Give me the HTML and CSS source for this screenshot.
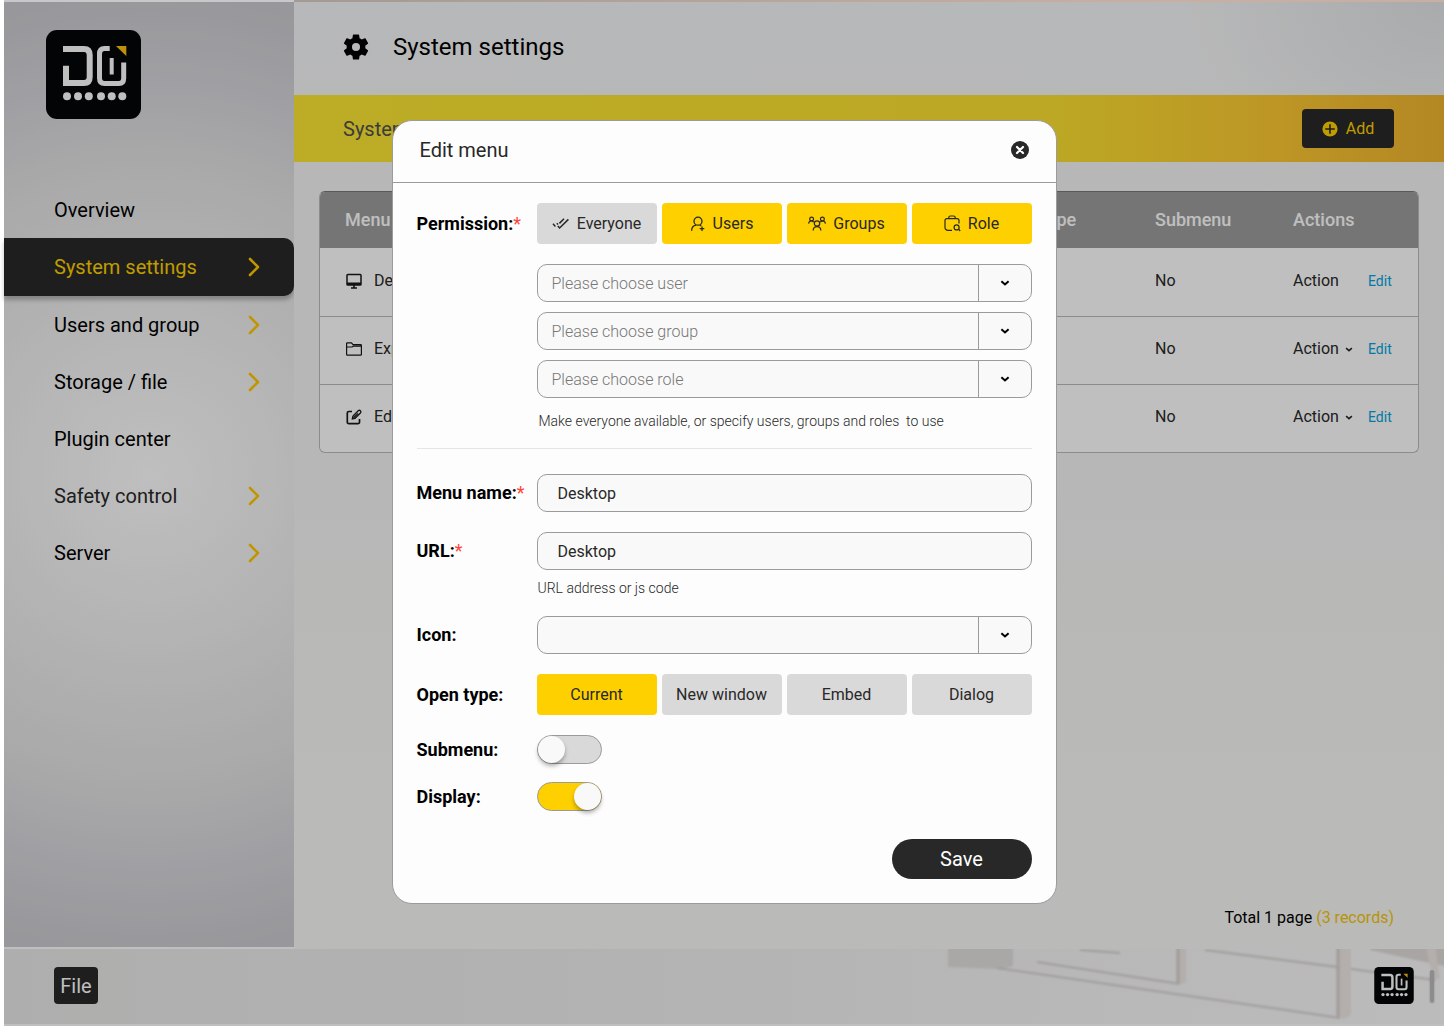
FILE: index.html
```html
<!DOCTYPE html>
<html lang="en">
<head>
<meta charset="utf-8">
<meta name="viewport" content="width=device-width, initial-scale=1">
<title>System settings</title>
<link rel="stylesheet" href="styles.css">
</head>
<body>
<svg class="sprite" aria-hidden="true">
  <symbol id="logo" viewBox="0 0 95 89">
    <rect width="95" height="89" rx="11" fill="#050608"/>
    <path d="M17 19H38Q43.7 19 43.7 25V47Q43.7 53 38 53H20V35.7" fill="none" stroke="#fff" stroke-width="6"/>
    <path d="M63.7 18.5H58.5Q53.5 18.5 53.5 24V48Q53.5 53.5 58.5 53.5H73Q77.7 53.5 77.7 48V32.5" fill="none" stroke="#fff" stroke-width="5"/>
    <path d="M65.7 28V44.5" stroke="#fff" stroke-width="4"/>
    <path d="M70 16H80.3V26Z" fill="#ffc20e"/>
    <g fill="#fff"><circle cx="21" cy="66.3" r="4"/><circle cx="32" cy="66.3" r="4"/><circle cx="42.8" cy="66.3" r="4"/><circle cx="55" cy="66.3" r="4"/><circle cx="65.7" cy="66.3" r="4"/><circle cx="76.3" cy="66.3" r="4"/></g>
  </symbol>
  <symbol id="next" viewBox="0 0 12 20"><path d="M2 2L10 10L2 18" fill="none" stroke="currentColor" stroke-width="2.6" stroke-linecap="round" stroke-linejoin="round"/></symbol>
  <symbol id="down" viewBox="0 0 10 6"><path d="M1.4 1.2L5 4.4L8.6 1.2" fill="none" stroke="currentColor" stroke-width="2"/></symbol>
</svg>

<div class="app">
  <aside class="sidebar">
    <a class="brand" href="#" aria-label="Home"><svg width="95" height="89"><use href="#logo"/></svg></a>
    <nav class="nav">
      <a class="nav-item" href="#">Overview</a>
      <a class="nav-item active" href="#" aria-current="page">System settings<svg class="next"><use href="#next"/></svg></a>
      <a class="nav-item" href="#">Users and group<svg class="next"><use href="#next"/></svg></a>
      <a class="nav-item" href="#">Storage / file<svg class="next"><use href="#next"/></svg></a>
      <a class="nav-item" href="#">Plugin center</a>
      <a class="nav-item soft" href="#">Safety control<svg class="next"><use href="#next"/></svg></a>
      <a class="nav-item" href="#">Server<svg class="next"><use href="#next"/></svg></a>
    </nav>
  </aside>

  <main class="main">
    <header class="title-bar">
      <svg class="gear" viewBox="2 2 20 20" aria-hidden="true"><path d="M19.14 12.94c.04-.3.06-.61.06-.94 0-.32-.02-.64-.07-.94l2.03-1.58c.18-.14.23-.41.12-.61l-1.92-3.32c-.12-.22-.37-.29-.59-.22l-2.39.96c-.5-.38-1.03-.7-1.62-.94l-.36-2.54c-.04-.24-.24-.41-.48-.41h-3.84c-.24 0-.43.17-.47.41l-.36 2.54c-.59.24-1.13.57-1.62.94l-2.39-.96c-.22-.08-.47 0-.59.22L2.74 8.87c-.12.21-.08.47.12.61l2.03 1.58c-.05.3-.09.63-.09.94s.02.64.07.94l-2.03 1.58c-.18.14-.23.41-.12.61l1.92 3.32c.12.22.37.29.59.22l2.39-.96c.5.38 1.03.7 1.62.94l.36 2.54c.05.24.24.41.48.41h3.84c.24 0 .44-.17.47-.41l.36-2.54c.59-.24 1.13-.56 1.62-.94l2.39.96c.22.08.47 0 .59-.22l1.92-3.32c.12-.22.07-.47-.12-.61l-2.01-1.58zM12 15.1a3.1 3.1 0 1 1 0-6.2 3.1 3.1 0 0 1 0 6.2z"/></svg>
      <h1>System settings</h1>
    </header>
    <div class="band">
      <span>System menu</span>
      <button class="add" type="button">
        <svg width="16" height="16" viewBox="0 0 16 16" aria-hidden="true"><circle cx="8" cy="8" r="7.6" fill="#ffd000"/><path d="M8 3.2V12.8M3.2 8H12.8" stroke="#282828" stroke-width="1.6"/></svg>
        Add
      </button>
    </div>
    <section class="content">
      <div class="table-card">
        <table>
          <colgroup><col><col class="col-type"><col class="col-sub"><col class="col-act"></colgroup>
          <thead>
            <tr><th>Menu name</th><th>Open type</th><th>Submenu</th><th>Actions</th></tr>
          </thead>
          <tbody>
            <tr>
              <td><span class="cell"><svg class="row-icon" viewBox="0 0 18 18"><path d="M2.8 2.5H15.2A.8.8 0 0 1 16 3.3V12.2A.8.8 0 0 1 15.2 13H2.8A.8.8 0 0 1 2 12.2V3.3A.8.8 0 0 1 2.8 2.5Z" fill="none" stroke="#191919" stroke-width="1.5"/><path d="M2 10.500H16V13H2Z" fill="#191919"/><path d="M9 13V16M6 16H12" stroke="#191919" stroke-width="1.6"/></svg>Desktop</span></td>
              <td></td><td>No</td>
              <td><span class="acts"><span class="act">Action</span><a href="#">Edit</a></span></td>
            </tr>
            <tr>
              <td><span class="cell"><svg class="row-icon" viewBox="0 0 18 18"><path d="M1.6 14.4V3.6A.8.8 0 0 1 2.4 2.8H6.5L8 4.6H15.6A.8.8 0 0 1 16.4 5.4V14.4A.8.8 0 0 1 15.6 15.2H2.4A.8.8 0 0 1 1.6 14.4ZM1.6 7H7L8.4 6.2H16.4" fill="none" stroke="#191919" stroke-width="1.2"/></svg>Explorer</span></td>
              <td></td><td>No</td>
              <td><span class="acts"><button class="act" type="button">Action<svg class="caret"><use href="#down"/></svg></button><a href="#">Edit</a></span></td>
            </tr>
            <tr>
              <td><span class="cell"><svg class="row-icon" viewBox="0 0 18 18"><path d="M7 3.500H3.800A1.500 1.500 0 0 0 2.300 5V14.200A1.500 1.500 0 0 0 3.800 15.700H13A1.500 1.500 0 0 0 14.500 14.200V11" fill="none" stroke="#191919" stroke-width="1.700"/><path d="M7.300 11L7.800 8.200L13.200 2.800A1.500 1.500 0 0 1 15.400 5L10 10.400ZM8.600 9.800L13 5.400" fill="none" stroke="#191919" stroke-width="1.300"/></svg>Editor</span></td>
              <td></td><td>No</td>
              <td><span class="acts"><button class="act" type="button">Action<svg class="caret"><use href="#down"/></svg></button><a href="#">Edit</a></span></td>
            </tr>
          </tbody>
        </table>
      </div>
      <p class="total">Total 1 page <span>(3 records)</span></p>
    </section>
  </main>

  <footer class="dock">
    <button class="file" type="button">File</button>
    <a class="dock-logo" href="#" aria-label="Desktop"><svg width="40" height="37"><use href="#logo"/></svg></a>
    <span class="grip"></span>
  </footer>
</div>

<div class="backdrop">
  <dialog class="modal" open aria-labelledby="modal-title">
    <header class="modal-head">
      <h2 id="modal-title">Edit menu</h2>
      <button class="close" type="button" aria-label="Close"><svg width="18" height="18" viewBox="0 0 18 18"><circle cx="9" cy="9" r="9" fill="#282828"/><path d="M6 6L12 12M12 6L6 12" stroke="#fff" stroke-width="2.2" stroke-linecap="round"/></svg></button>
    </header>
    <form class="form">
      <div class="field">
        <span class="label">Permission:<i>*</i></span>
        <div class="stack">
          <div class="choices" role="group" aria-label="Permission">
            <button class="choice" type="button" aria-pressed="false"><svg width="18" height="14" viewBox="0 0 18 14"><path d="M1 6.800L3.400 9.400M5.800 9L7.600 11L16.400 2.400M4.800 6.200L6 7.600M7.400 6.400L12 1.800" fill="none" stroke="#282828" stroke-width="1.500"/></svg>Everyone</button>
            <button class="choice on" type="button" aria-pressed="true"><svg width="16" height="16" viewBox="0 0 16 16"><path d="M1.600 14.800C1.600 11.500 3.600 9.700 6 9.200M10 9.200L11.400 10M8 1.200A4 4 0 0 1 8 9.200A4 4 0 0 1 8 1.200ZM12 10.400V15M9.700 12.700H14.300" fill="none" stroke="#282828" stroke-width="1.300"/></svg>Users</button>
            <button class="choice on" type="button" aria-pressed="true"><svg width="18" height="16" viewBox="0 0 18 16"><g fill="none" stroke="#282828" stroke-width="1.200"><circle cx="9" cy="7.500" r="2.700"/><path d="M5.200 14.500C5.200 12 6.800 10.600 9 10.600S12.800 12 12.800 14.500M.6 7.600C.8 5.800 1.600 5 3.200 5S5 5.400 5.800 6.200M17.400 7.600C17.200 5.800 16.400 5 14.800 5S13 5.400 12.200 6.200"/><circle cx="3.600" cy="3" r="1.900"/><circle cx="14.400" cy="3" r="1.900"/></g></svg>Groups</button>
            <button class="choice on" type="button" aria-pressed="true"><svg width="17" height="17" viewBox="0 0 17 17"><path d="M8 15.400H4A3 3 0 0 1 1 12.400V5.600Q1 3.600 3 3.600H13Q15 3.600 15 5.600V8.500M4.800 3.600V2.600Q4.800 1 6.400 1H9.600Q11.200 1 11.200 2.600V3.600M14.600 14.200L16.200 16" fill="none" stroke="#282828" stroke-width="1.200"/><circle cx="12.600" cy="12.400" r="2.500" fill="none" stroke="#282828" stroke-width="1.200"/></svg>Role</button>
          </div>
          <div class="selects">
            <div class="select"><select aria-label="User"><option>Please choose user</option></select><svg class="arrow"><use href="#down"/></svg></div>
            <div class="select"><select aria-label="Group"><option>Please choose group</option></select><svg class="arrow"><use href="#down"/></svg></div>
            <div class="select"><select aria-label="Role"><option>Please choose role</option></select><svg class="arrow"><use href="#down"/></svg></div>
          </div>
          <p class="hint">Make everyone available, or specify users, groups and roles&nbsp; to use</p>
        </div>
      </div>
      <hr>
      <div class="field">
        <label class="label short" for="menu-name">Menu name:<i>*</i></label>
        <input class="text" id="menu-name" type="text" value="Desktop">
      </div>
      <div class="field">
        <label class="label short" for="url">URL:<i>*</i></label>
        <div>
          <input class="text" id="url" type="text" value="Desktop">
          <p class="hint url-hint">URL address or js code</p>
        </div>
      </div>
      <div class="field">
        <label class="label short" for="icon">Icon:</label>
        <div class="select"><select id="icon"><option></option></select><svg class="arrow"><use href="#down"/></svg></div>
      </div>
      <div class="field">
        <span class="label">Open type:</span>
        <div class="choices" role="group" aria-label="Open type">
          <button class="choice on" type="button" aria-pressed="true">Current</button>
          <button class="choice" type="button" aria-pressed="false">New window</button>
          <button class="choice" type="button" aria-pressed="false">Embed</button>
          <button class="choice" type="button" aria-pressed="false">Dialog</button>
        </div>
      </div>
      <div class="switches">
        <div class="field">
          <label class="label switch-label" for="submenu">Submenu:</label>
          <input class="switch" id="submenu" type="checkbox" role="switch">
        </div>
        <div class="field">
          <label class="label switch-label" for="display">Display:</label>
          <input class="switch" id="display" type="checkbox" role="switch" checked>
        </div>
      </div>
      <button class="save" type="submit">Save</button>
    </form>
  </dialog>
</div>
</body>
</html>
```
FILE: styles.css
```css
* { box-sizing: border-box; }
body {
  margin: 0;
  background: #fff;
  color: #000;
  font: 16px/20px Roboto, "Liberation Sans", sans-serif;
}
h1, h2, p { margin: 0; font-weight: 400; }
button, input, select { font: inherit; color: inherit; border: 0; padding: 0; margin: 0; }
button { cursor: pointer; background: none; }
a { color: inherit; text-decoration: none; }
svg { display: block; flex: none; }
.sprite { width: 0; height: 0; position: absolute; }

/* Application frame */
.app {
  min-height: 100vh;
  padding: 2px 0 2px 4px;
  display: grid;
  grid-template-columns: 290px 1fr;
  grid-template-rows: 1fr 75px;
  background: linear-gradient(to right, #c8c8cb 290px, #a39a93 290px, #c9afa2 80%) 4px 0 / 100% 2px no-repeat;
}
.sidebar {
  margin-bottom: 2px;
  background: radial-gradient(circle 480px at 50% 50%, #fff 0%, #f2f2f3 30%, #e2e2e2 65%, #d7d7dc 80%, #cbcbd0 100%);
}
.brand { display: block; width: 95px; margin: 28px 0 62px 42px; }
.nav { display: flex; flex-direction: column; }
.nav-item {
  height: 57px;
  padding: 0 34px 0 50px;
  display: flex;
  align-items: center;
  justify-content: space-between;
  font-size: 20px;
}
.nav-item.active {
  height: 58px;
  background: #282828;
  color: #ffd000;
  border-radius: 0 10px 10px 0;
  box-shadow: 0 4px 4px rgba(0, 0, 0, .25);
}
.nav-item.soft { color: #282828; }
.next { width: 12px; height: 20px; color: #ffc800; }

.main {
  display: flex;
  flex-direction: column;
  background:
    radial-gradient(ellipse 260px 180px at 100% 0, rgba(90, 100, 105, .12), transparent),
    linear-gradient(#f5f6f7, #f4f4f4 40%, #f9f9f7);
}
.title-bar { height: 93px; padding: 0 49px 4px; display: flex; align-items: center; gap: 24px; }
.gear { width: 26px; height: 26px; }
h1 { font-size: 24px; line-height: 28px; }
.band {
  height: 67px;
  padding: 0 50px 0 49px;
  display: flex;
  align-items: center;
  justify-content: space-between;
  background: linear-gradient(to right, #fbe633, #fbe030 66%, #fdc933 85%, #f0b52f);
  color: #505050;
  font-size: 20px;
}
.add {
  width: 92px;
  height: 39px;
  display: flex;
  align-items: center;
  justify-content: center;
  gap: 8px;
  border-radius: 4px;
  background: #282828;
  color: #ffd000;
  font-size: 16px;
}
.content { flex: 1; padding: 29px 25px 21px; display: flex; flex-direction: column; justify-content: space-between; }
.table-card { border: 1px solid #bbb; border-top-color: #777; border-radius: 6px; background: #fff; overflow: hidden; }
table { width: 100%; border-collapse: collapse; table-layout: fixed; }
.col-type { width: 160px; }
.col-sub { width: 138px; }
.col-act { width: 125px; }
th { height: 56px; padding: 0; background: #9d9d9d; color: #fff; font-size: 18px; font-weight: 500; text-align: left; }
td { height: 68px; padding: 0 0 2px; color: #282828; }
th:first-child, td:first-child { padding-left: 25px; }
tbody tr + tr td { border-top: 1px solid #bbb; }
.cell { display: flex; align-items: center; gap: 11px; }
.row-icon { width: 18px; height: 18px; }
.acts { display: flex; align-items: center; }
.act { width: 75px; display: flex; align-items: center; gap: 6px; }
.caret { width: 8px; height: 5px; }
.acts a { color: #00a3e0; font-size: 14px; }
.total { padding-right: 25px; text-align: right; }
.total span { color: #f5c60a; }

.dock {
  grid-column: 1 / -1;
  padding: 0 10px 2px 50px;
  display: flex;
  align-items: center;
  background:
    url("data:image/svg+xml,%3Csvg xmlns='http://www.w3.org/2000/svg' width='504' height='75'%3E%3Cdefs%3E%3Cfilter id='s' x='-10%25' y='-10%25' width='120%25' height='120%25'%3E%3CfeGaussianBlur stdDeviation='1'/%3E%3C/filter%3E%3C/defs%3E%3Cg filter='url(%23s)'%3E%3Cpath d='M8 -5H73V17L60 20L8 18Z' fill='%23e3e0de'/%3E%3Cpath d='M140 1L180 4M97 13L240 35M57 19L400 69M265 1L397 18M411 20L495 31' fill='none' stroke='%23d6d1ce' stroke-width='2'/%3E%3Cpath d='M430 -5H510V18L480 12L430 1Z' fill='%23e2dcda'/%3E%3Cpath d='M237 -5H246V34L241 35L237 34ZM397 -5H411V66L404 70L397 67ZM485 -5H495L500 30H493Z' fill='%23f0e9e6'/%3E%3Cpath d='M238 -5V34M398 -5V68' stroke='%23d6d0cd' stroke-width='3'/%3E%3C/g%3E%3C/svg%3E") right top no-repeat,
    linear-gradient(to right, #e9e9e8, #efeff0 45%, #f6f6f7 75%, #fafafa);
}
.file { width: 44px; height: 37px; border-radius: 4px; background: #282828; color: #fff; font-size: 20px; }
.dock-logo { margin: 0 16px 0 auto; }
.grip { width: 4px; height: 32px; border-radius: 2px; background: #bbb; box-shadow: 0 1px 2px rgba(0, 0, 0, .3); }

/* Edit dialog */
.backdrop {
  position: fixed;
  inset: 2px 0 0 4px;
  display: flex;
  align-items: center;
  justify-content: center;
  padding-bottom: 4px;
  background: rgba(0, 0, 0, .25);
}
.modal {
  position: static;
  width: 665px;
  margin: 0;
  padding: 0;
  border: 1px solid #9b9b9b;
  border-radius: 20px;
  background: #fdfdfd;
  color: #000;
}
.modal-head {
  height: 62px;
  padding: 0 27px 4px;
  display: flex;
  align-items: center;
  justify-content: space-between;
  border-bottom: 1px solid #9b9b9b;
  color: #282828;
}
h2 { font-size: 20px; line-height: 24px; }
.form { padding: 20px 24px 24px; display: flex; flex-direction: column; gap: 20px; }
.field { display: grid; grid-template-columns: 120px 1fr; align-items: start; }
.label { font-size: 18px; font-weight: 700; line-height: 41px; white-space: nowrap; }
.label.short { line-height: 38px; }
.label.switch-label { line-height: 29px; }
.label i { color: #ff4438; font-style: normal; font-weight: 400; }
.stack { display: grid; gap: 20px; }
.choices { display: grid; grid-template-columns: repeat(4, 1fr); gap: 5px; }
.choice {
  height: 41px;
  display: flex;
  align-items: center;
  justify-content: center;
  gap: 7px;
  border-radius: 4px;
  background: #d9d9d9;
  color: #282828;
}
.choice.on { background: #ffd000; }
.selects { display: grid; gap: 10px; }
.select { display: grid; align-items: center; }
.select select, .arrow { grid-area: 1 / 1; }
.select select, .text {
  width: 100%;
  height: 38px;
  border: 1px solid #9b9b9b;
  border-radius: 10px;
  background: #f9f9f9;
}
.select select {
  appearance: none;
  padding: 2px 68px 0 14px;
  background: linear-gradient(#9b9b9b, #9b9b9b) right 52px top / 1px 100% no-repeat #f9f9f9;
  color: #777;
  font-weight: 300;
}
.arrow { justify-self: end; width: 10px; height: 6px; margin-right: 22px; pointer-events: none; }
.text { display: block; padding: 0 20px; color: #282828; }
.hint { padding-left: 2px; color: #282828; font-size: 14px; font-weight: 300; line-height: 16px; }
.stack .hint { margin-top: -5px; }
.url-hint { margin-top: 10px; padding-left: 1px; }
hr { width: 100%; height: 1px; margin: -1px 0 5px; border: 0; background: #e6e6e6; }
.switches { display: grid; gap: 18px; }
.switch {
  appearance: none;
  width: 65px;
  height: 29px;
  border: 1px solid #9b9b9b;
  border-radius: 15px;
  background: #d9d9d9;
  display: flex;
  align-items: center;
}
.switch::before {
  content: "";
  width: 27px;
  height: 27px;
  border-radius: 50%;
  background: #f9f9f9;
  box-shadow: 0 3px 4px rgba(0, 0, 0, .3);
}
.switch:checked { background: #ffd000; justify-content: flex-end; }
.save {
  align-self: flex-end;
  width: 140px;
  height: 40px;
  margin-top: 8px;
  border-radius: 20px;
  background: #282828;
  color: #fff;
  font-size: 20px;
}
```
